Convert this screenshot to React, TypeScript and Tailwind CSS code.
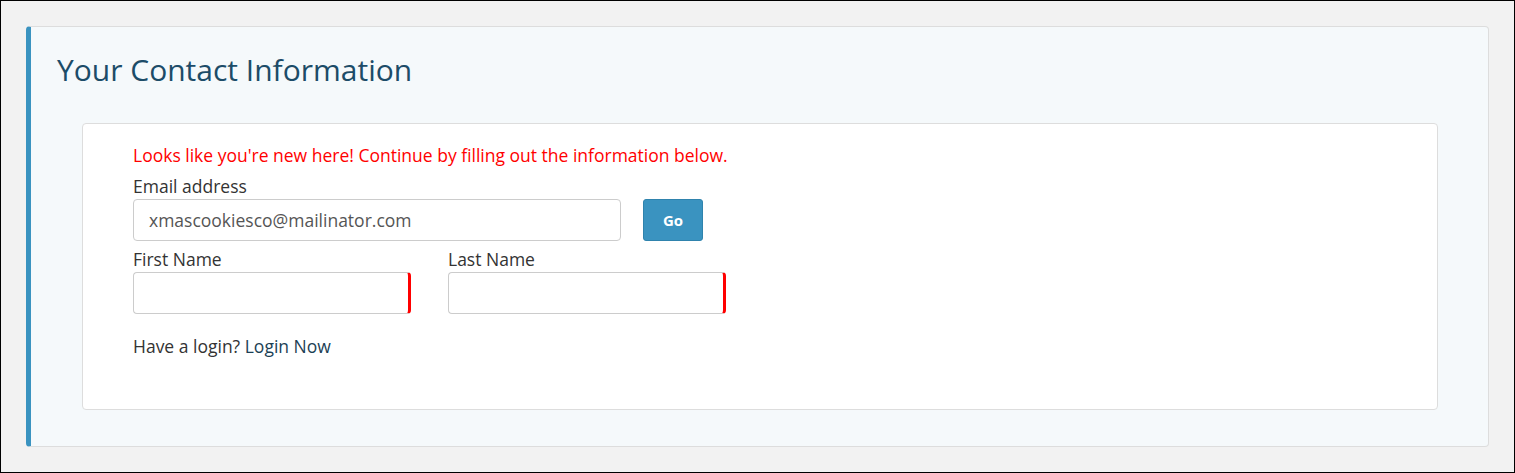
export default function App() {
  return (
    <div className="w-[1515px] h-[473px] border border-black bg-[#f2f2f2] p-[25px] font-['Open_Sans',sans-serif]">
      <div className="h-full rounded-[4px] border border-[#dddddd] border-l-[5px] border-l-[#3a93c0] bg-[#f5f9fb] pl-[26px] pr-[50px] pt-[22px]">
        <h1 className="text-[30px] leading-[42px] text-[#1c4c68]">Your Contact Information</h1>
        <div className="ml-[25px] mt-[32px] h-[287px] rounded-[4px] border border-[#dddddd] bg-white pl-[50px] pt-[19px]">
          <p className="text-[17.5px] leading-[24px] text-[#ff0000]">
            Looks like you're new here! Continue by filling out the information below.
          </p>
          <label className="mt-[8px] block text-[17.5px] leading-[22px] text-[#333333]">Email address</label>
          <div className="mt-[2px] flex items-center gap-[22px]">
            <div className="flex h-[42px] w-[488px] items-center rounded-[4px] border border-[#cccccc] bg-white px-[15px] text-[17.5px] text-[#555555]">
              xmascookiesco@mailinator.com
            </div>
            <button className="h-[42px] w-[60px] rounded-[3px] border border-[#2f83ad] bg-[#3a93c0] text-[15px] font-bold text-white">
              Go
            </button>
          </div>
          <div className="mt-[7px] flex gap-[37px]">
            <div>
              <label className="block text-[17.5px] leading-[22px] text-[#333333]">First Name</label>
              <div className="mt-[2px] h-[42px] w-[278px] rounded-[4px] border border-[#cccccc] border-r-[3px] border-r-[#ff0000] bg-white" />
            </div>
            <div>
              <label className="block text-[17.5px] leading-[22px] text-[#333333]">Last Name</label>
              <div className="mt-[2px] h-[42px] w-[278px] rounded-[4px] border border-[#cccccc] border-r-[3px] border-r-[#ff0000] bg-white" />
            </div>
          </div>
          <p className="mt-[21px] text-[17.5px] leading-[22px] text-[#333333]">
            Have a login? <span className="text-[#1c3f55]">Login Now</span>
          </p>
        </div>
      </div>
    </div>
  );
}
